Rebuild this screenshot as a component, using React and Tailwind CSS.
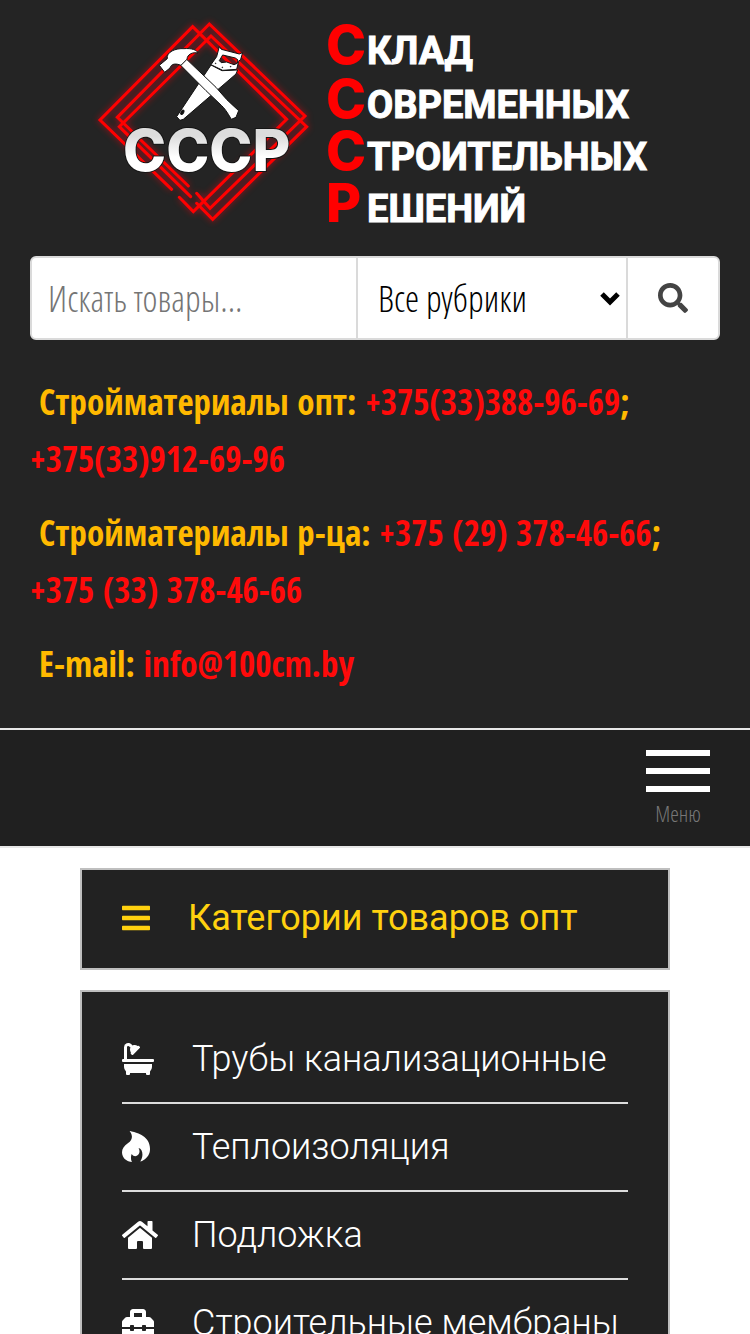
import React from 'react';
import { FaBars, FaBath, FaHome, FaHotjar, FaSearch, FaToolbox } from 'react-icons/fa';

const contacts = [
  {
    label: 'Стройматериалы опт:',
    links: [
      { text: '+375(33)388-96-69', href: 'tel:+375333889669' },
      { text: '+375(33)912-69-96', href: 'tel:+375339126996' },
    ],
  },
  {
    label: 'Стройматериалы р-ца:',
    links: [
      { text: '+375 (29) 378-46-66', href: 'tel:+375293784666' },
      { text: '+375 (33) 378-46-66', href: 'tel:+375333784666' },
    ],
  },
  {
    label: 'E-mail:',
    links: [{ text: 'info@100cm.by', href: 'mailto:info@100cm.by' }],
  },
];

const categories = [
  { name: 'Трубы канализационные', Icon: FaBath, size: 'h-8 w-8' },
  { name: 'Теплоизоляция', Icon: FaHotjar, size: 'h-8 w-7' },
  { name: 'Подложка', Icon: FaHome, size: 'h-8 w-9' },
  { name: 'Строительные мембраны', Icon: FaToolbox, size: 'h-8 w-8' },
];

const sloganLines = [
  { first: 'С', rest: 'КЛАД', y: 64 },
  { first: 'С', rest: 'ОВРЕМЕННЫХ', y: 118 },
  { first: 'С', rest: 'ТРОИТЕЛЬНЫХ', y: 170 },
  { first: 'Р', rest: 'ЕШЕНИЙ', y: 222 },
];

const Frame = () => (
  <>
    <path d="M275 538 L60 330 L338 50 L620 328 L340 605 L298 562" />
    <path d="M325 528 L112 322 L388 42 L675 318 L390 595 L350 550" />
    <path d="M332 560 L118 350 L393 78 L680 350 L398 628 L350 580" />
  </>
);

const Logo = () => (
  <svg viewBox="30 0 690 240" className="block w-full" role="img" aria-label="СССР">
    <defs>
      <filter id="glow" x="-20%" y="-20%" width="140%" height="140%">
        <feGaussianBlur stdDeviation="10" />
      </filter>
      <linearGradient id="letters" x1="0" y1="0" x2="0" y2="1">
        <stop offset="0.3" stopColor="#dcdcdc" />
        <stop offset="0.6" stopColor="#ffffff" />
      </linearGradient>
    </defs>

    <g transform="translate(80 10) scale(0.3333)">
      {/* neon frame */}
      <g fill="none" stroke="#ff0018" strokeWidth="12" opacity="0.5" filter="url(#glow)">
        <Frame />
      </g>
      <g fill="none" stroke="#ff0000" strokeWidth="9" strokeLinecap="round" strokeMiterlimit="10">
        <Frame />
      </g>

      {/* saw */}
      <g fill="#fff" stroke="#111" strokeWidth="3" strokeLinejoin="round">
        <path d="M393 165 L426 182 L473 180 L468 192 L310 328 L300 331 L290 320 Z" />
        <path
          fillRule="evenodd"
          d="M418 110 L424 118 L478 132 L488 128 L482 148 L476 154 L470 178 L428 181 L393 164 L410 140 Z M428 135 L418 152 L424 158 L440 156 L462 164 L472 160 L474 150 L466 144 Z"
        />
        <ellipse cx="307" cy="307" rx="4" ry="7" fill="#111" transform="rotate(30 307 307)" />
        <circle cx="407" cy="160" r="1" fill="#111" />
        <circle cx="427" cy="172" r="1" fill="#111" />
        <circle cx="452" cy="170" r="1" fill="#111" />
      </g>
      {/* hammer */}
      <g fill="#fff" stroke="#111" strokeWidth="3" strokeLinejoin="round">
        <path d="M302 166 L320 148 L408 232 Q440 272 476 302 L468 322 L454 328 Q436 296 424 286 L378 242 Z" />
        <path d="M238 166 L262 146 C258 126 288 114 312 116 C334 114 352 120 354 129 C338 126 322 132 321 148 L303 166 C288 160 274 160 270 174 L254 187 Z" />
      </g>
    </g>

    <text
      x="123"
      y="171"
      fill="url(#letters)"
      stroke="#151515"
      strokeWidth="2"
      paintOrder="stroke"
      className="font-['Inter',sans-serif] text-[58px] font-extrabold"
    >
      СССР
    </text>

    {sloganLines.map(({ first, rest, y }) => (
      <g key={rest}>
        <text x="326" y={y} fill="#ff0000" className="font-['Inter',sans-serif] text-[54px] font-extrabold">
          {first}
        </text>
        <text
          x="367"
          y={y}
          fill="#fff"
          stroke="#fff"
          strokeWidth="1"
          className="font-['Roboto',sans-serif] text-[38px] font-bold"
        >
          {rest}
        </text>
      </g>
    ))}
  </svg>
);

const SearchForm = () => (
  <form
    onSubmit={(e) => e.preventDefault()}
    className="flex h-[84px] overflow-hidden rounded-md border-2 border-[#dadada] bg-white font-['Open_Sans_Condensed_Light','Open_Sans_Condensed','Open_Sans',sans-serif] text-4xl font-light"
  >
    <input
      type="search"
      aria-label="Искать товары"
      placeholder="Искать товары..."
      className="min-w-0 flex-1 px-4 pt-0.5 outline-none placeholder:text-[#757575]"
    />
    <div className="relative w-[272px] border-x-2 border-[#dadada]">
      <select aria-label="Рубрика" className="h-full w-full appearance-none bg-transparent pt-0.5 pr-10 pl-5 text-black outline-none">
        <option>Все рубрики</option>
      </select>
      <svg viewBox="0 0 20 16" className="pointer-events-none absolute top-8 right-1.5 h-4 w-5">
        <path d="M2 4 L10 12 L18 4" fill="none" stroke="#000" strokeWidth="5" />
      </svg>
    </div>
    <button type="submit" aria-label="Поиск" className="flex w-[90px] items-center justify-center text-[#444]">
      <FaSearch size={30} />
    </button>
  </form>
);

const App = () => {
  return (
    <div className="h-screen overflow-hidden bg-white font-['Open_Sans_Condensed','Open_Sans',sans-serif]">
      <header className="bg-[#242424] px-[30px] pb-9">
        <Logo />
        <div className="mt-4">
          <SearchForm />
        </div>
        <div className="mt-[33px] flex flex-col gap-[17px] text-[35px] leading-[57px] font-bold text-[#ffb900]">
          {contacts.map(({ label, links }) => (
            <p key={label}>
              &nbsp;{label}{' '}
              {links.map(({ text, href }, i) => (
                <React.Fragment key={text}>
                  {i > 0 && '; '}
                  <a href={href} className="inline-block text-[#ff0a0a]">
                    {text}
                  </a>
                </React.Fragment>
              ))}
            </p>
          ))}
        </div>
      </header>

      <nav className="flex justify-end border-y-2 border-[#e7e7e7] bg-[#202020] px-10 py-5">
        <button type="button" className="flex w-16 flex-col items-center gap-3">
          <span className="h-1.5 w-full bg-white" />
          <span className="h-1.5 w-full bg-white" />
          <span className="h-1.5 w-full bg-white" />
          <span className="-mt-1 font-['Open_Sans_Condensed_Light','Open_Sans_Condensed','Open_Sans',sans-serif] text-[22px] leading-[26px] font-light text-[#777]">
            Меню
          </span>
        </button>
      </nav>

      <main className="flex flex-col gap-5 px-20 py-5 font-['Roboto',sans-serif] text-4xl">
        <h2 className="flex h-[102px] items-center border-2 border-[#bfbfbf] bg-[#222] px-10 pb-0.5 text-[#ffd10f]">
          <FaBars size={32} className="mr-[38px] w-7" />
          Категории товаров опт
        </h2>
        <ul className="border-2 border-[#bfbfbf] bg-[#222] px-10 py-6 font-light text-white">
          {categories.map(({ name, Icon, size }) => (
            <li key={name} className="border-b-2 border-[#ddd]">
              <a href="#" className="flex h-[86px] items-center whitespace-nowrap">
                <span className="w-[70px] shrink-0">
                  <Icon className={size} />
                </span>
                {name}
              </a>
            </li>
          ))}
        </ul>
      </main>
    </div>
  );
};

export default App;
